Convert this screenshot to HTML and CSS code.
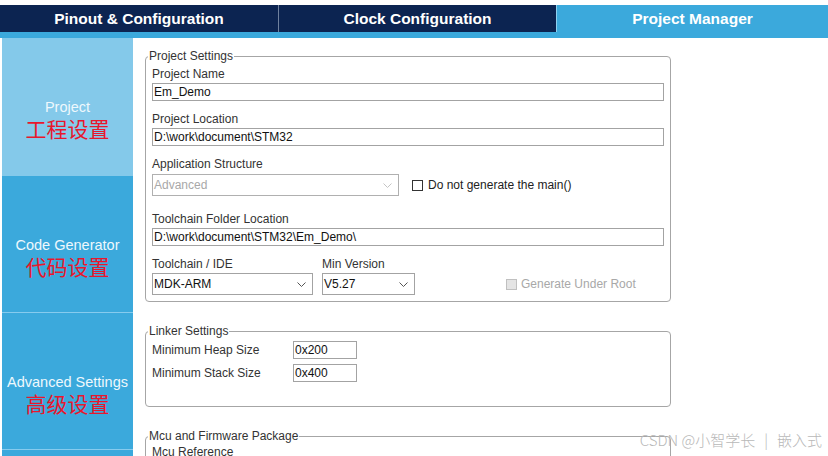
FILE: index.html
```html
<!DOCTYPE html>
<html lang="en">
<head>
    <meta charset="UTF-8">
    <title>Project Manager</title>
    <link rel="stylesheet" href="styles.css">
</head>
<body>
    <div class="tabs">
        <div class="tab tab-pinout">Pinout &amp; Configuration</div>
        <div class="tab tab-clock">Clock Configuration</div>
        <div class="tab tab-active">Project Manager</div>
    </div>
    <div class="strip"></div>

    <div class="main">
        <div class="sidebar">
            <div class="side-item current">
                <span class="en">Project</span>
                <span class="zh">工程设置</span>
            </div>
            <div class="side-item">
                <span class="en">Code Generator</span>
                <span class="zh">代码设置</span>
            </div>
            <div class="side-item">
                <span class="en">Advanced Settings</span>
                <span class="zh">高级设置</span>
            </div>
        </div>

        <div class="content">
            <fieldset class="group project-group">
                <legend>Project Settings</legend>

                <div class="field">
                    <label>Project Name</label>
                    <input class="text-input" type="text" value="Em_Demo">
                </div>

                <div class="field">
                    <label>Project Location</label>
                    <input class="text-input" type="text" value="D:\work\document\STM32">
                </div>

                <div class="field field-app">
                    <label>Application Structure</label>
                    <div class="row">
                        <div class="select select-app disabled">
                            <span>Advanced</span>
                            <svg width="9" height="5" viewBox="0 0 9 5"><polyline points="0.5,0.5 4.5,4.5 8.5,0.5" fill="none" stroke="#c4c4c4" stroke-width="1"/></svg>
                        </div>
                        <div class="check check-main">
                            <span class="box"></span>
                            <span>Do not generate the main()</span>
                        </div>
                    </div>
                </div>

                <div class="field field-folder">
                    <label>Toolchain Folder Location</label>
                    <input class="text-input" type="text" value="D:\work\document\STM32\Em_Demo\">
                </div>

                <div class="field row toolchain-row">
                    <div class="col-ide">
                        <label>Toolchain / IDE</label>
                        <div class="select">
                            <span>MDK-ARM</span>
                            <svg width="9" height="5" viewBox="0 0 9 5"><polyline points="0.5,0.5 4.5,4.5 8.5,0.5" fill="none" stroke="#555" stroke-width="1"/></svg>
                        </div>
                    </div>
                    <div class="col-version">
                        <label>Min Version</label>
                        <div class="select">
                            <span>V5.27</span>
                            <svg width="9" height="5" viewBox="0 0 9 5"><polyline points="0.5,0.5 4.5,4.5 8.5,0.5" fill="none" stroke="#555" stroke-width="1"/></svg>
                        </div>
                    </div>
                    <div class="check check-root disabled">
                        <span class="box"></span>
                        <span>Generate Under Root</span>
                    </div>
                </div>
            </fieldset>

            <fieldset class="group linker-group">
                <legend>Linker Settings</legend>
                <div class="linker-grid">
                    <span class="linker-label">Minimum Heap Size</span>
                    <input class="small-input" type="text" value="0x200">
                    <span class="linker-label">Minimum Stack Size</span>
                    <input class="small-input" type="text" value="0x400">
                </div>
            </fieldset>

            <fieldset class="group mcu-group">
                <legend>Mcu and Firmware Package</legend>
                <div class="field">
                    <label>Mcu Reference</label>
                </div>
            </fieldset>
        </div>
    </div>

    <div class="watermark">
        <span>CSDN @小智学长</span>
        <span class="sep">|</span>
        <span>嵌入式</span>
    </div>
</body>
</html>
```

FILE: styles.css
```css
body {
    margin: 0;
    padding-top: 5px;
    width: 828px;
    height: 456px;
    overflow: hidden;
    position: relative;
    background: #fff;
    font-family: "Liberation Sans", Arial, sans-serif;
    box-sizing: border-box;
}

/* top tabs */
.tabs {
    display: flex;
    height: 27px;
    background: #0c2451;
}
.tab {
    display: flex;
    align-items: center;
    justify-content: center;
    color: #fff;
    font-size: 15.5px;
    font-weight: bold;
}
.tab-pinout {
    width: 278px;
}
.tab-clock {
    width: 277px;
    border-left: 1px solid #6f819e;
}
.tab-active {
    flex: 1;
    background: #3ba9dc;
    border-left: 1px solid #8fd0ef;
}
.strip {
    height: 6px;
    background: #3ba9dc;
}

.main {
    display: flex;
    height: 418px;
}

/* left menu */
.sidebar {
    width: 131px;
    margin-left: 2px;
    background: #3ba9dc;
}
.side-item {
    height: 137px;
    padding-top: 60px;
    box-sizing: border-box;
    text-align: center;
    border-bottom: 1px solid #86cbee;
}
.side-item.current {
    height: 138px;
    background: #84c9ea;
    border-bottom: none;
}
.en {
    display: block;
    font-size: 14.5px;
    line-height: 18px;
    color: #eef8fd;
    white-space: nowrap;
}
.zh {
    display: block;
    font-family: "Noto Sans CJK SC", sans-serif;
    font-size: 21px;
    line-height: 24px;
    color: #e8172d;
}

/* settings area */
.content {
    flex: 1;
    padding: 11px 0 0 12px;
}
.group {
    width: 526px;
    min-width: 0;
    box-sizing: border-box;
    margin: 0 0 22px;
    padding: 4px 6px 6px;
    border: 1px solid #a6a6a6;
    border-radius: 4px;
}
.group legend {
    padding: 0 1px;
    margin-left: -4px;
    font-size: 12px;
    line-height: 14px;
    color: #333;
}
.field {
    margin-top: 11px;
}
.field:first-of-type {
    margin-top: 0;
}
.field label {
    display: block;
    margin-bottom: 2px;
    font-size: 12px;
    line-height: 14px;
    color: #333;
    white-space: nowrap;
}
.field-app label {
    margin-bottom: 3px;
}
.field-folder {
    margin-top: 16px;
}
.text-input {
    display: block;
    width: 512px;
    height: 18px;
    box-sizing: border-box;
    margin: 0;
    padding: 0 1px;
    border: 1px solid #a3a3a3;
    border-radius: 0;
    font-family: "Liberation Sans", Arial, sans-serif;
    font-size: 12px;
    color: #111;
    background: #fff;
    outline: none;
}

.row {
    display: flex;
    align-items: center;
}
.select {
    display: flex;
    align-items: center;
    justify-content: space-between;
    height: 22px;
    box-sizing: border-box;
    padding: 0 6px 0 1px;
    border: 1px solid #a3a3a3;
    font-size: 12px;
    color: #111;
    background: #fff;
}
.select.disabled {
    color: #a8a8a8;
    border-color: #b0b0b0;
}
.select-app {
    width: 247px;
}

.check {
    display: flex;
    align-items: center;
    gap: 5px;
    font-size: 12px;
    color: #222;
    white-space: nowrap;
}
.box {
    width: 11px;
    height: 11px;
    box-sizing: border-box;
    border: 1px solid #333;
    background: #fff;
}
.check.disabled {
    color: #a8a8a8;
    gap: 4px;
}
.check.disabled .box {
    border-color: #c0c0c0;
    background: #e4e4e4;
}
.check-main {
    margin-left: 13px;
}

.toolchain-row {
    align-items: flex-end;
}
.col-ide {
    width: 161px;
}
.col-version {
    width: 93px;
    margin-left: 9px;
}
.check-root {
    height: 22px;
    margin-left: 91px;
}

/* linker */
.linker-group {
    padding: 3px 6px 24px;
}
.linker-grid {
    display: grid;
    grid-template-columns: 141px 64px;
    row-gap: 5px;
    align-items: center;
}
.linker-label {
    font-size: 12px;
    color: #333;
}
.small-input {
    width: 64px;
    height: 18px;
    box-sizing: border-box;
    margin: 0;
    padding: 0 1px;
    border: 1px solid #a3a3a3;
    border-radius: 0;
    font-family: "Liberation Sans", Arial, sans-serif;
    font-size: 12px;
    color: #111;
    outline: none;
}

.mcu-group {
    padding-top: 2px;
}

.watermark {
    position: absolute;
    right: 6px;
    bottom: 7px;
    display: flex;
    gap: 9px;
    font-family: "Noto Sans CJK SC", sans-serif;
    font-size: 15px;
    font-weight: 300;
    line-height: 18px;
    color: #b8b8b8;
    white-space: nowrap;
}
```
